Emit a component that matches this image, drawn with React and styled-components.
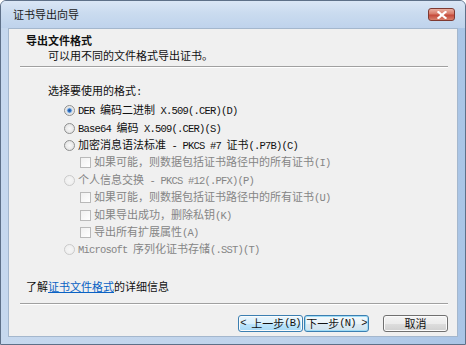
import React from 'react';
import styled, {createGlobalStyle} from 'styled-components';

const GlobalStyle = createGlobalStyle`
  html, body {
    margin: 0;
    padding: 0;
    background: #ffffff;
  }
  body {
    font-family: "Noto Sans CJK SC", "Liberation Sans", sans-serif;
    font-size: 11px;
    color: #111111;
  }
`;

const Window = styled.div`
  width: 466px;
  height: 345px;
  box-sizing: border-box;
  display: flex;
  flex-direction: column;
  border: 1px solid #5e7088;
  border-radius: 6px 6px 0 0;
  background: linear-gradient(90deg, #c6d8ee 0%, #bfd3eb 60%, #aac5e6 100%);
  overflow: hidden;
`;

const TitleBar = styled.div`
  height: 27px;
  flex: none;
  display: flex;
  align-items: center;
  justify-content: space-between;
  padding: 0 10px 0 12px;
  background: linear-gradient(180deg, #dae6f5 0%, #cadbef 45%, #bfd3ec 100%);
`;

const Title = styled.span`
  font-size: 11px;
  line-height: 15px;
  color: #1a1a1a;
`;

const CloseButton = styled.div`
  width: 27px;
  height: 13px;
  box-sizing: border-box;
  display: flex;
  align-items: center;
  justify-content: center;
  border: 1px solid #7e3a32;
  border-radius: 3px;
  background: linear-gradient(180deg, #eab0a2 0%, #d87a68 45%, #c4493a 55%, #d8806c 100%);
`;

const Client = styled.div`
  flex: 1;
  margin: 0 7px 7px 7px;
  display: flex;
  flex-direction: column;
  border: 1px solid #a4b7cd;
  background: #f0f0f0;
`;

const Header = styled.div`
  padding: 4px 0 0 17px;
`;

const Heading = styled.div`
  font-weight: 700;
  line-height: 15px;
`;

const Subtitle = styled.div`
  margin-left: 22px;
  line-height: 15px;
`;

const Separator = styled.div`
  margin: ${p => p.$top || 0}px 9px 0 11px;
  border-top: 1px solid #a0a0a0;
  border-bottom: 1px solid #ffffff;
`;

const Prompt = styled.div`
  margin-top: 15px;
  padding-left: 39px;
  line-height: 15px;
`;

const OptionList = styled.div`
  margin-top: 2px;
  padding-left: 55px;
  display: flex;
  flex-direction: column;
`;

const OptionRow = styled.div`
  height: 17.4px;
  display: flex;
  align-items: center;
  gap: 3px;
  padding-left: ${p => (p.$indent ? 16 : 0)}px;
  color: ${p => (p.$disabled ? '#858585' : '#111111')};
  white-space: nowrap;
`;

const Radio = styled.span`
  width: 11px;
  height: 11px;
  flex: none;
  box-sizing: border-box;
  border-radius: 50%;
  border: 1px solid ${p => (p.$disabled ? '#cacaca' : '#8e8f8f')};
  background: ${p =>
    p.$checked
      ? 'radial-gradient(circle, #1b4f9a 0%, #3d7ccb 28%, #9cc3ec 36%, #e4e4e4 50%, #f6f6f6 100%)'
      : p.$disabled
      ? 'radial-gradient(circle, #f6f6f6 0%, #ececec 100%)'
      : 'radial-gradient(circle, #f9f9f9 0%, #dcdcdc 100%)'};
`;

const Checkbox = styled.span`
  width: 11px;
  height: 11px;
  flex: none;
  box-sizing: border-box;
  border: 1px solid ${p => (p.$disabled ? '#b9b9b9' : '#8e8f8f')};
  background: linear-gradient(135deg, #f0f0f0 0%, #ffffff 100%);
`;

const Label = styled.span`
  line-height: 15px;
`;

const Latin = styled.span`
  font-family: "Liberation Mono", monospace;
  font-size: 10.5px;
  letter-spacing: -0.8px;
  white-space: pre;
`;

const InfoLine = styled.div`
  margin-top: 20px;
  padding-left: 17px;
  line-height: 15px;
`;

const Link = styled.a`
  color: #0a62c4;
  text-decoration: underline;
`;

const Footer = styled.div`
  margin-top: auto;
  padding-bottom: 4px;
  display: flex;
  flex-direction: column;
`;

const ButtonRow = styled.div`
  margin-top: 10px;
  padding-right: 9px;
  display: flex;
  justify-content: flex-end;
`;

const Button = styled.div`
  width: 65px;
  height: 17px;
  box-sizing: border-box;
  margin-left: ${p => p.$gap || 0}px;
  display: flex;
  align-items: center;
  justify-content: center;
  border-radius: 3px;
  line-height: 15px;
  white-space: nowrap;
  border: 1px solid ${p => (p.$variant ? '#3c7fb1' : '#707070')};
  box-shadow: ${p => (p.$variant === 'default' ? 'inset 0 0 0 1px #9fdcf6' : 'inset 0 0 0 1px #fbfbfb')};
  background: ${p =>
    p.$variant === 'hover'
      ? 'linear-gradient(180deg, #eaf6fd 0%, #d9f0fc 50%, #bee6fd 51%, #a7d9f5 100%)'
      : p.$variant === 'default'
      ? 'linear-gradient(180deg, #f4f9fc 0%, #eaf3f8 50%, #dceaf2 51%, #d0e3ee 100%)'
      : 'linear-gradient(180deg, #f4f4f4 0%, #ececec 50%, #dedede 51%, #d0d0d0 100%)'};
`;

const mixed = text =>
  text.split(/([\x20-\x7e]+)/).map((part, i) =>
    /^[\x20-\x7e]+$/.test(part) ? <Latin key={i}>{part}</Latin> : part
  );

const options = [
  {kind: 'radio', label: 'DER 编码二进制 X.509(.CER)(D)', checked: true},
  {kind: 'radio', label: 'Base64 编码 X.509(.CER)(S)'},
  {kind: 'radio', label: '加密消息语法标准 - PKCS #7 证书(.P7B)(C)'},
  {kind: 'check', label: '如果可能，则数据包括证书路径中的所有证书(I)', disabled: true},
  {kind: 'radio', label: '个人信息交换 - PKCS #12(.PFX)(P)', disabled: true},
  {kind: 'check', label: '如果可能，则数据包括证书路径中的所有证书(U)', disabled: true},
  {kind: 'check', label: '如果导出成功，删除私钥(K)', disabled: true},
  {kind: 'check', label: '导出所有扩展属性(A)', disabled: true},
  {kind: 'radio', label: 'Microsoft 序列化证书存储(.SST)(T)', disabled: true},
];

const CloseIcon = () => (
  <svg width="10" height="8" viewBox="0 0 10 8">
    <path d="M1.5 1 L8.5 7 M8.5 1 L1.5 7" stroke="#ffffff" strokeWidth="2.2" strokeLinecap="square" />
  </svg>
);

const App = () => (
  <>
    <GlobalStyle />
    <Window>
      <TitleBar>
        <Title>证书导出向导</Title>
        <CloseButton>
          <CloseIcon />
        </CloseButton>
      </TitleBar>
      <Client>
        <Header>
          <Heading>导出文件格式</Heading>
          <Subtitle>可以用不同的文件格式导出证书。</Subtitle>
        </Header>
        <Separator $top={3} />
        <Prompt>{mixed('选择要使用的格式:')}</Prompt>
        <OptionList>
          {options.map(opt => (
            <OptionRow key={opt.label} $indent={opt.kind === 'check'} $disabled={opt.disabled}>
              {opt.kind === 'radio' ? (
                <Radio $checked={opt.checked} $disabled={opt.disabled} />
              ) : (
                <Checkbox $disabled={opt.disabled} />
              )}
              <Label>{mixed(opt.label)}</Label>
            </OptionRow>
          ))}
        </OptionList>
        <InfoLine>
          了解<Link>证书文件格式</Link>的详细信息
        </InfoLine>
        <Footer>
          <Separator />
          <ButtonRow>
            <Button $variant="hover">{mixed('< 上一步(B)')}</Button>
            <Button $variant="default" $gap={1}>{mixed('下一步(N) >')}</Button>
            <Button $gap={14}>取消</Button>
          </ButtonRow>
        </Footer>
      </Client>
    </Window>
  </>
);

export default App;
